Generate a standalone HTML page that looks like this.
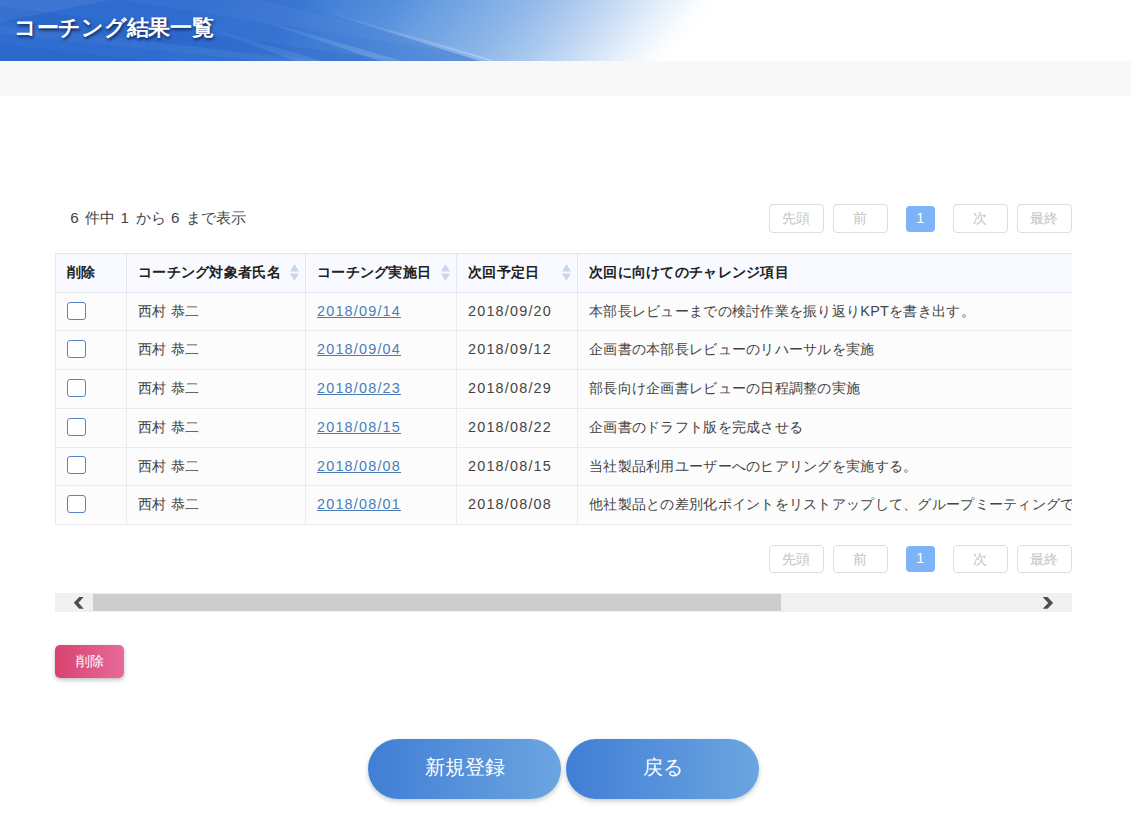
<!DOCTYPE html>
<html lang="ja">
<head>
<meta charset="utf-8">
<title>コーチング結果一覧</title>
<style>
*{box-sizing:border-box;margin:0;padding:0}
html,body{width:1131px;height:817px;overflow:hidden;background:#fff}
body{position:relative;font-family:"Liberation Sans",sans-serif;font-size:14.4px;color:#333;line-height:1}
.abs{position:absolute}
#hdr{left:0;top:0;width:1131px;height:61px;overflow:hidden}
#hdr svg{display:block}
#title{left:14px;top:15px;font-size:22px;letter-spacing:-.3px;font-weight:bold;color:#fff;line-height:26px;white-space:nowrap;text-shadow:1px 2px 3px rgba(0,0,30,.65)}
#band{left:0;top:61px;width:1131px;height:35px;background:#f8f8f8}
#info{left:70.2px;top:208px;height:20px;line-height:20px;font-size:15.2px;white-space:nowrap;color:#444;letter-spacing:.1px;word-spacing:.7px}
#info b{font-weight:normal;letter-spacing:1.65px}
.pg{letter-spacing:.28px;height:29px;border:1px solid #dedede;border-radius:4px;color:#c3c3c3;text-align:center;line-height:27px;background:#fff;white-space:nowrap}
.pg.cur{height:26px;border:0;background:#7db3f8;color:#fff;line-height:25px}
#tbl{left:55px;top:253px;width:1017px;height:272px;overflow:hidden}
.hl{position:absolute;left:0;width:1017px;height:1px}
.vl{position:absolute;top:0;width:1px;height:272px;background:#ebebeb}
.th{position:absolute;top:0px;height:38px;line-height:38px;font-weight:bold;color:#222;white-space:nowrap;letter-spacing:.28px}
.td{position:absolute;height:38px;line-height:36px;white-space:nowrap;color:#444;letter-spacing:.28px}
.d{letter-spacing:1.2px}
a.d{color:#4a7cb8;text-decoration:underline}
.cb{position:absolute;left:12px;width:19px;height:18px;border:1.3px solid #5b82c6;border-radius:3px;background:#fff}
.so{position:absolute;top:11px;width:9px;height:17px}
#sb{left:55px;top:593px;width:1017px;height:19px;background:#f0f0f0}
#thumb{left:38px;top:1px;width:688px;height:17px;background:#cdcdcd}
#del{left:55px;top:645px;width:69px;height:33px;border-radius:5px;background:linear-gradient(90deg,#d9426e,#e56b9a);color:#fff;text-align:center;line-height:32px;box-shadow:0 2px 4px rgba(0,0,0,.25)}
.big{top:739px;width:193px;height:60px;border-radius:30px;background:linear-gradient(90deg,#417ed5,#6ba5e1);color:#fff;font-size:20px;text-align:center;line-height:56px;box-shadow:0 2px 5px rgba(0,0,0,.22)}
</style>
</head>
<body>
<div id="hdr" class="abs">
<svg width="1131" height="61" viewBox="0 0 1131 61">
<defs>
<linearGradient id="g1" gradientUnits="userSpaceOnUse" x1="-22" y1="0" x2="728" y2="0">
<stop offset="0" stop-color="#3572d2"/>
<stop offset=".033" stop-color="#2f6dcf"/>
<stop offset=".3" stop-color="#2e6ccf"/>
<stop offset=".433" stop-color="#3a77d3"/>
<stop offset=".5" stop-color="#4a86d9"/>
<stop offset=".559" stop-color="#5690dc"/>
<stop offset=".617" stop-color="#6a9fe0"/>
<stop offset=".677" stop-color="#7dabe5"/>
<stop offset=".736" stop-color="#90b8e9"/>
<stop offset=".795" stop-color="#a9c8ee"/>
<stop offset=".853" stop-color="#c5daf4"/>
<stop offset=".912" stop-color="#e3edfa"/>
<stop offset=".96" stop-color="#f8fbfe"/>
<stop offset=".99" stop-color="#ffffff"/>
</linearGradient>
<linearGradient id="dk" x1="0" y1="0" x2="0" y2="1">
<stop offset="0" stop-color="#2f6dcf" stop-opacity="0"/>
<stop offset=".5" stop-color="#2f6dcf" stop-opacity=".35"/>
<stop offset="1" stop-color="#2f6dcf" stop-opacity=".5"/>
</linearGradient>
<linearGradient id="st" x1="0" y1="0" x2="0" y2="1">
<stop offset="0" stop-color="#fff" stop-opacity="0"/>
<stop offset="1" stop-color="#cfe6ff" stop-opacity=".45"/>
</linearGradient>
</defs>
<rect width="1131" height="61" fill="#fff"/>
<g transform="skewX(-40)">
<rect x="-30" y="0" width="900" height="61" fill="url(#g1)"/>
</g>
<polygon points="290,0 490,61 180,61" fill="url(#dk)"/>
<polygon points="300,4 486,58 494,61 480,61" fill="url(#st)"/>
<polygon points="240,14 392,58 400,61 380,61" fill="url(#st)" opacity=".5"/>
<polygon points="200,26 306,56 320,61 296,61" fill="url(#st)" opacity=".35"/>
<polygon points="0,0 110,0 0,22" fill="#fff" opacity=".07"/>
<polygon points="0,6 0,20 300,61 400,61" fill="#1b4fb4" opacity=".13"/>
<polygon points="0,44 0,61 150,61" fill="#1b4fb4" opacity=".12"/>
<polygon points="120,0 260,0 470,50 440,50" fill="#fff" opacity=".035"/>
<polygon points="0,26 0,34 260,61 330,61" fill="#fff" opacity=".04"/>
</svg>
</div>
<div id="title" class="abs">コーチング結果一覧</div>
<div id="band" class="abs"></div>

<div id="info" class="abs"><b>6</b> 件中 <b>1</b> から <b>6</b> まで表示</div>

<div class="abs pg" style="left:769px;top:204px;width:55px">先頭</div>
<div class="abs pg" style="left:833px;top:204px;width:55px">前</div>
<div class="abs pg cur" style="left:906px;top:206px;width:29px">1</div>
<div class="abs pg" style="left:953px;top:204px;width:55px">次</div>
<div class="abs pg" style="left:1017px;top:204px;width:55px">最終</div>

<div id="tbl" class="abs">
<div class="abs" style="left:0;top:0;width:1017px;height:40px;background:#f8faff"></div>
<div class="abs" style="left:0;top:40px;width:1017px;height:232px;background:#fcfcfc"></div>
<!-- vertical lines -->
<div class="vl" style="left:0"></div>
<div class="vl" style="left:71px"></div>
<div class="vl" style="left:250px"></div>
<div class="vl" style="left:401px"></div>
<div class="vl" style="left:522px"></div>
<div class="vl" style="left:0;height:40px;background:#e3e8f0"></div>
<div class="vl" style="left:71px;height:40px;background:#e3e8f0"></div>
<div class="vl" style="left:250px;height:40px;background:#e3e8f0"></div>
<div class="vl" style="left:401px;height:40px;background:#e3e8f0"></div>
<div class="vl" style="left:522px;height:40px;background:#e3e8f0"></div>
<!-- horizontal lines -->
<div class="hl" style="top:0;background:#e0e6ee"></div>
<div class="hl" style="top:39px;background:#e0e6ee"></div>
<div class="hl" style="top:77px;background:#ebebeb"></div>
<div class="hl" style="top:116px;background:#ebebeb"></div>
<div class="hl" style="top:155px;background:#ebebeb"></div>
<div class="hl" style="top:194px;background:#ebebeb"></div>
<div class="hl" style="top:232px;background:#ebebeb"></div>
<div class="hl" style="top:271px;background:#ebebeb"></div>
<!-- header -->
<div class="th" style="left:12px">削除</div>
<div class="th" style="left:83px">コーチング対象者氏名</div>
<div class="th" style="left:262px">コーチング実施日</div>
<div class="th" style="left:413px">次回予定日</div>
<div class="th" style="left:534px">次回に向けてのチャレンジ項目</div>
<svg class="so" style="left:235px" viewBox="0 0 9 17"><path d="M4.5 0L9 7.5H0zM4.5 17L0 9.5H9z" fill="#c9d6ec"/></svg>
<svg class="so" style="left:386px" viewBox="0 0 9 17"><path d="M4.5 0L9 7.5H0zM4.5 17L0 9.5H9z" fill="#c9d6ec"/></svg>
<svg class="so" style="left:507px" viewBox="0 0 9 17"><path d="M4.5 0L9 7.5H0zM4.5 17L0 9.5H9z" fill="#c9d6ec"/></svg>
<!-- rows -->
<div class="cb" style="top:49px"></div>
<div class="td" style="left:83px;top:40px">西村 恭二</div>
<div class="td" style="left:262px;top:40px"><a class="d">2018/09/14</a></div>
<div class="td" style="left:413px;top:40px"><span class="d">2018/09/20</span></div>
<div class="td" style="left:534px;top:40px">本部長レビューまでの検討作業を振り返りKPTを書き出す。</div>

<div class="cb" style="top:87px"></div>
<div class="td" style="left:83px;top:78px">西村 恭二</div>
<div class="td" style="left:262px;top:78px"><a class="d">2018/09/04</a></div>
<div class="td" style="left:413px;top:78px"><span class="d">2018/09/12</span></div>
<div class="td" style="left:534px;top:78px">企画書の本部長レビューのリハーサルを実施</div>

<div class="cb" style="top:126px"></div>
<div class="td" style="left:83px;top:117px">西村 恭二</div>
<div class="td" style="left:262px;top:117px"><a class="d">2018/08/23</a></div>
<div class="td" style="left:413px;top:117px"><span class="d">2018/08/29</span></div>
<div class="td" style="left:534px;top:117px">部長向け企画書レビューの日程調整の実施</div>

<div class="cb" style="top:165px"></div>
<div class="td" style="left:83px;top:156px">西村 恭二</div>
<div class="td" style="left:262px;top:156px"><a class="d">2018/08/15</a></div>
<div class="td" style="left:413px;top:156px"><span class="d">2018/08/22</span></div>
<div class="td" style="left:534px;top:156px">企画書のドラフト版を完成させる</div>

<div class="cb" style="top:203px"></div>
<div class="td" style="left:83px;top:195px">西村 恭二</div>
<div class="td" style="left:262px;top:195px"><a class="d">2018/08/08</a></div>
<div class="td" style="left:413px;top:195px"><span class="d">2018/08/15</span></div>
<div class="td" style="left:534px;top:195px">当社製品利用ユーザーへのヒアリングを実施する。</div>

<div class="cb" style="top:242px"></div>
<div class="td" style="left:83px;top:233px">西村 恭二</div>
<div class="td" style="left:262px;top:233px"><a class="d">2018/08/01</a></div>
<div class="td" style="left:413px;top:233px"><span class="d">2018/08/08</span></div>
<div class="td" style="left:534px;top:233px">他社製品との差別化ポイントをリストアップして、グループミーティングで共有する。</div>
</div>

<div class="abs pg" style="left:769px;top:545px;width:55px;height:28px;line-height:26px">先頭</div>
<div class="abs pg" style="left:833px;top:545px;width:55px;height:28px;line-height:26px">前</div>
<div class="abs pg cur" style="left:906px;top:546px;width:29px">1</div>
<div class="abs pg" style="left:953px;top:545px;width:55px;height:28px;line-height:26px">次</div>
<div class="abs pg" style="left:1017px;top:545px;width:55px;height:28px;line-height:26px">最終</div>

<div id="sb" class="abs">
<div id="thumb" class="abs"></div>
<svg class="abs" style="left:0;top:0" width="1017" height="19" viewBox="0 0 1017 19"><polygon points="18.8,9.8 24.2,4.1 28.7,4.1 23.5,9.8 28.7,15.8 24.2,15.8" fill="#4e4e4e"/><polygon points="987.7,4.1 992.5,4.1 998.1,9.9 992.5,15.8 987.7,15.8 993.2,9.9" fill="#4e4e4e"/></svg>
</div>

<div id="del" class="abs">削除</div>
<div class="abs big" style="left:368px">新規登録</div>
<div class="abs big" style="left:566px">戻る</div>
</body>
</html>
